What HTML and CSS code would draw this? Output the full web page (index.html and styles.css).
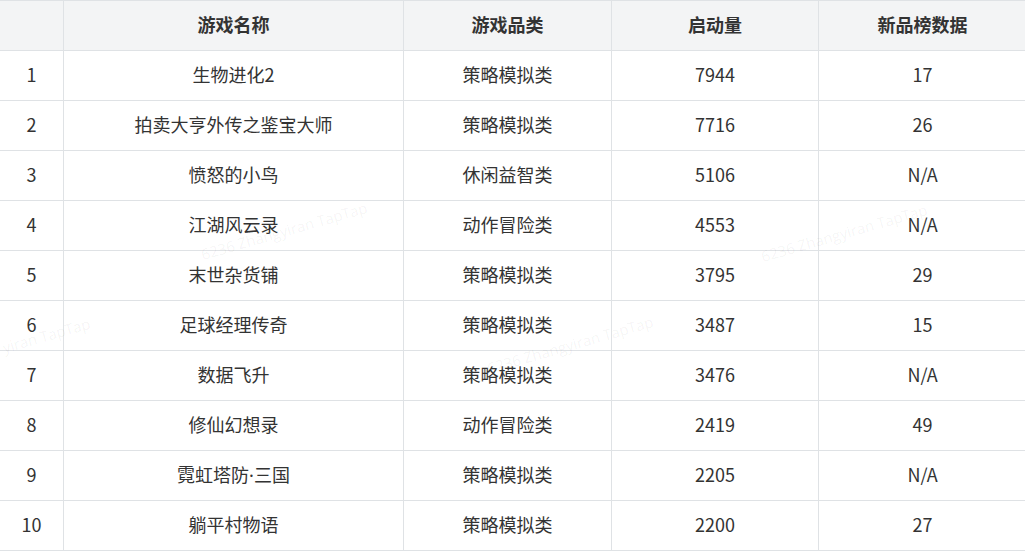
FILE: index.html
```html
<!DOCTYPE html>
<html lang="zh-CN">
<head>
<meta charset="utf-8">
<title>新品榜</title>
<link rel="stylesheet" href="styles.css">
</head>
<body>
<div class="page">
<table class="rank">
  <colgroup>
    <col class="c-idx"><col class="c-name"><col class="c-cat"><col class="c-num"><col class="c-new">
  </colgroup>
  <thead>
    <tr><th></th><th>游戏名称</th><th>游戏品类</th><th>启动量</th><th>新品榜数据</th></tr>
  </thead>
  <tbody>
    <tr><td>1</td><td>生物进化2</td><td>策略模拟类</td><td>7944</td><td>17</td></tr>
    <tr><td>2</td><td>拍卖大亨外传之鉴宝大师</td><td>策略模拟类</td><td>7716</td><td>26</td></tr>
    <tr><td>3</td><td>愤怒的小鸟</td><td>休闲益智类</td><td>5106</td><td>N/A</td></tr>
    <tr><td>4</td><td>江湖风云录</td><td>动作冒险类</td><td>4553</td><td>N/A</td></tr>
    <tr><td>5</td><td>末世杂货铺</td><td>策略模拟类</td><td>3795</td><td>29</td></tr>
    <tr><td>6</td><td>足球经理传奇</td><td>策略模拟类</td><td>3487</td><td>15</td></tr>
    <tr><td>7</td><td>数据飞升</td><td>策略模拟类</td><td>3476</td><td>N/A</td></tr>
    <tr><td>8</td><td>修仙幻想录</td><td>动作冒险类</td><td>2419</td><td>49</td></tr>
    <tr><td>9</td><td>霓虹塔防<span class="dot">·</span>三国</td><td>策略模拟类</td><td>2205</td><td>N/A</td></tr>
    <tr><td>10</td><td>躺平村物语</td><td>策略模拟类</td><td>2200</td><td>27</td></tr>
  </tbody>
</table>
<div class="wm wm1">6236 Zhangyiran TapTap</div>
<div class="wm wm2">6236 Zhangyiran TapTap</div>
<div class="wm wm3">yiran TapTap</div>
<div class="wm wm4">6236 Zhangyiran TapTap</div>
</div>
</body>
</html>
```
FILE: styles.css
```css
html, body {
  margin: 0;
  padding: 0;
  background: #ffffff;
}
.page {
  position: relative;
  width: 1025px;
  height: 554px;
  overflow: hidden;
}
.rank {
  border-collapse: collapse;
  table-layout: fixed;
  width: 1027px;
  margin-left: -1px;
  font-family: "Noto Sans CJK SC", "Noto Sans", sans-serif;
  font-size: 18px;
  color: #333333;
}
.c-idx { width: 64px; }
.c-name { width: 340px; }
.c-cat { width: 208px; }
.c-num { width: 207px; }
.c-new { width: 208px; }
.rank th, .rank td {
  border: 1px solid #dfe2e5;
  height: 46px;
  padding: 0 0 3px 0;
  text-align: center;
  vertical-align: middle;
  line-height: 24px;
}
.rank th {
  background: #f3f4f5;
  font-weight: 700;
}
.dot {
  font-family: "Noto Sans", sans-serif;
}
.wm {
  position: absolute;
  font-family: "Open Sans", sans-serif;
  font-size: 15px;
  line-height: 20px;
  color: rgba(0, 0, 0, 0.05);
  white-space: nowrap;
  transform: rotate(-16deg);
  transform-origin: left bottom;
  pointer-events: none;
}
.wm1 { left: 204px; top: 244px; }
.wm2 { left: 764px; top: 246px; }
.wm3 { left: 0; top: 338px; transform-origin: left top; }
.wm4 { left: 490px; top: 358px; }
```
